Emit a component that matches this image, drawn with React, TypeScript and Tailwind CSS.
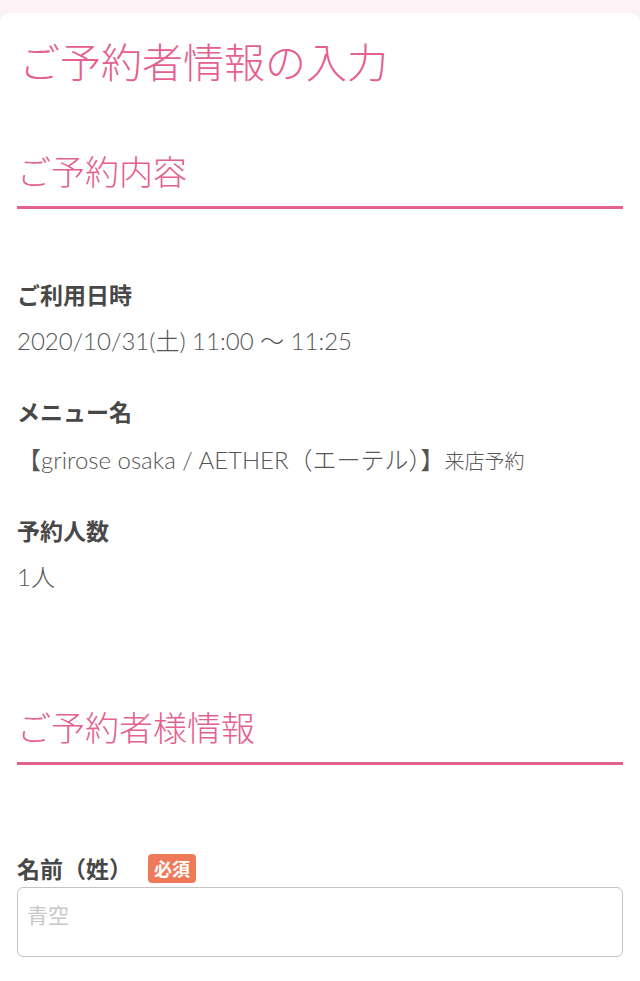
import React from "react";

const font = { fontFamily: '"Noto Sans CJK JP", "Noto Sans", sans-serif' };
const latin = { fontFamily: 'Lato, "Noto Sans CJK JP", sans-serif' };

export default function App() {
  return (
    <div className="min-h-screen bg-[#fdf2f5] pt-[13px]" style={font}>
      <div className="bg-white rounded-t-[10px] px-[17px] pb-10">
        <h1 className="pt-[23px] text-[41px] leading-[48px] font-light text-[#e4608f] pl-[2px]">
          ご予約者情報の入力
        </h1>

        <h2 className="mt-[67px] pb-[15px] border-b-[3px] border-[#e4608f] text-[34px] leading-[40px] font-light text-[#e4608f]">
          ご予約内容
        </h2>

        <div className="mt-[70px] flex flex-col">
          <div>
            <div className="text-[23px] leading-[30px] font-bold text-[#484848]">ご利用日時</div>
            <div className="mt-[17px] text-[24px] leading-[30px] font-light text-[#555]" style={latin}>
              2020/10/31(土) 11:00 〜 11:25
            </div>
          </div>
          <div className="mt-[40px]">
            <div className="text-[23px] leading-[30px] font-bold text-[#484848]">メニュー名</div>
            <div className="mt-[19px] text-[24px] leading-[30px] font-light text-[#555]" style={latin}>
              【grirose osaka / AETHER（エーテル）】<span className="text-[20px]">来店予約</span>
            </div>
          </div>
          <div className="mt-[39px]">
            <div className="text-[23px] leading-[30px] font-bold text-[#484848]">予約人数</div>
            <div className="mt-[17px] text-[24px] leading-[30px] font-light text-[#555]" style={latin}>
              1人
            </div>
          </div>
        </div>

        <h2 className="mt-[115px] pb-[15px] border-b-[3px] border-[#e4608f] text-[34px] leading-[40px] font-light text-[#e4608f]">
          ご予約者様情報
        </h2>

        <div className="mt-[88px]">
          <div className="flex items-center">
            <span className="text-[23px] leading-[30px] font-bold text-[#484848]">名前（姓）</span>
            <span className="ml-[16px] rounded-[4px] bg-[#ee7a5a] px-[6px] text-[18px] leading-[29px] font-bold text-white">
              必須
            </span>
          </div>
          <input
            className="mt-[4px] block w-full h-[70px] rounded-[6px] border-[1.5px] border-[#c4c4c4] px-[9px] pb-[16px] text-[21px] text-[#555] placeholder:text-[#c8c8c8] outline-none"
            placeholder="青空"
          />
        </div>
      </div>
    </div>
  );
}
